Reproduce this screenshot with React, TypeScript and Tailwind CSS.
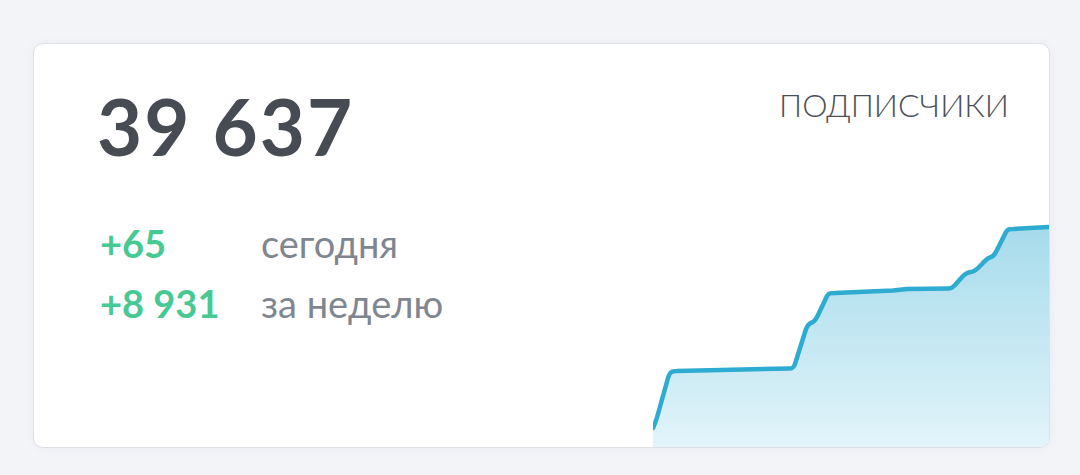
export default function App() {
  const line =
    "M0,207 C2,203 3,200 5,193 L15,157 C17,151 18,150 24,150 L136,147.5 C140,147.5 141,146 142,143 L153,108 C155,103 157,102 160,101 C163,99 164,96 166,92 L174,75 C176,72 177,72 182,72 L240,69.5 L254,68 L296,67.5 C299,67.5 300,66 302,64 L310,55 C313,52 315,51 319,50.7 C323,50 325,47 329,43 C333,39 334,37 338,36 C341,35 342,33 344,29 L353,11 C355,8 356,8 360,8 L396,6";

  return (
    <div className="h-[475px] w-[1080px] bg-[#f3f4f8] pt-[43px] pl-[33px] pr-[30px] font-['Lato','Noto_Sans',sans-serif]">
      <div className="relative h-[405px] overflow-hidden rounded-[10px] border border-[#dfe0e5] bg-white shadow-[0_0_12px_rgba(30,40,80,0.04)]">
        <div className="flex items-start justify-between pl-[63px] pr-[40px] pt-[43px]">
          <div className="text-[78px] font-bold leading-none tracking-[2px] text-[#464b54]">39 637</div>
          <div className="mt-[2px] text-[32px] font-light leading-none text-[#4b5058]">ПОДПИСЧИКИ</div>
        </div>

        <div className="mt-[58px] grid grid-cols-[161px_auto] gap-y-[20px] pl-[66px]">
          <div className="text-[38px] font-bold leading-[40px] text-[#47c993]">+65</div>
          <div className="text-[38px] leading-[40px] text-[#7f8690]">сегодня</div>
          <div className="text-[38px] font-bold leading-[40px] text-[#47c993]">+8 931</div>
          <div className="text-[38px] leading-[40px] text-[#7f8690]">за неделю</div>
        </div>

        <svg
          className="absolute bottom-0 right-0"
          width="396"
          height="226"
          viewBox="0 0 396 226"
        >
          <defs>
            <linearGradient id="fill" x1="0" y1="0" x2="0" y2="1">
              <stop offset="0" stopColor="#a6dbeb" />
              <stop offset="1" stopColor="#e2f4fa" />
            </linearGradient>
          </defs>
          <path d={`${line} L396,226 L0,226 Z`} fill="url(#fill)" />
          <path
            d={line}
            fill="none"
            stroke="#2eabd0"
            strokeWidth="4.5"
            strokeLinejoin="round"
            strokeLinecap="round"
          />
        </svg>
      </div>
    </div>
  );
}
